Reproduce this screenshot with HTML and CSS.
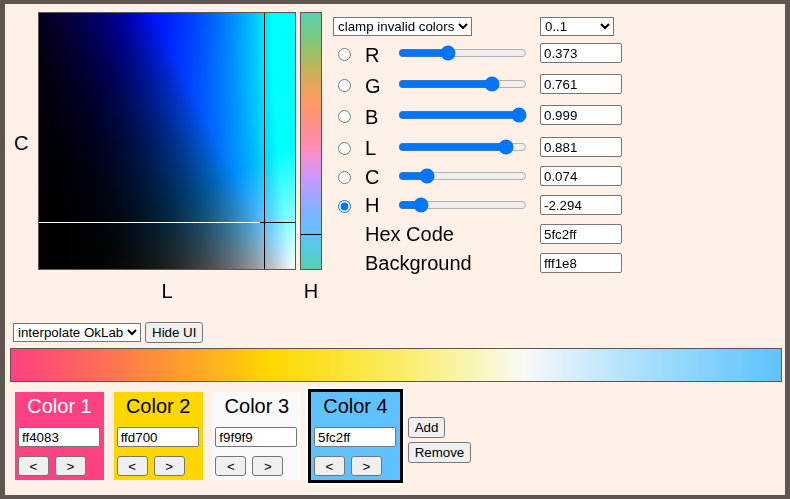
FILE: index.html
```html
<!DOCTYPE html>
<html>
<head>
<meta charset="utf-8">
<title>OkLab picker</title>
<link rel="stylesheet" href="styles.css">
</head>
<body>
<div class="page">
  <div class="top">
    <div class="picker">
      <div class="axis-c">C</div>
      <canvas id="plane" class="plane" width="256" height="256"></canvas>
      <canvas id="hue" class="hue" width="20" height="256"></canvas>
      <div></div>
      <div class="axis-lbl">L</div>
      <div class="axis-lbl hue-lbl">H</div>
    </div>
    <div class="controls">
      <select class="sel mode"><option>clamp invalid colors</option></select>
      <select class="sel range-sel"><option>0..1</option></select>

      <div class="cell"><input type="radio" name="ax" class="radio"></div>
      <div class="cell lbl p2">R</div>
      <div class="cell"><input type="range" class="slider" min="0" max="1" step="0.001" value="0.373"></div>
      <div class="cell"><input type="text" class="num" value="0.373"></div>

      <div class="cell"><input type="radio" name="ax" class="radio"></div>
      <div class="cell lbl p2">G</div>
      <div class="cell"><input type="range" class="slider" min="0" max="1" step="0.001" value="0.761"></div>
      <div class="cell"><input type="text" class="num" value="0.761"></div>

      <div class="cell"><input type="radio" name="ax" class="radio"></div>
      <div class="cell lbl p2">B</div>
      <div class="cell"><input type="range" class="slider" min="0" max="1" step="0.001" value="0.999"></div>
      <div class="cell"><input type="text" class="num" value="0.999"></div>

      <div class="cell"><input type="radio" name="ax" class="radio"></div>
      <div class="cell lbl p1">L</div>
      <div class="cell"><input type="range" class="slider" min="0" max="1" step="0.001" value="0.881"></div>
      <div class="cell"><input type="text" class="num" value="0.881"></div>

      <div class="cell"><input type="radio" name="ax" class="radio"></div>
      <div class="cell lbl p1">C</div>
      <div class="cell"><input type="range" class="slider" min="0" max="0.4" step="0.001" value="0.074"></div>
      <div class="cell"><input type="text" class="num" value="0.074"></div>

      <div class="cell"><input type="radio" name="ax" class="radio" checked></div>
      <div class="cell lbl">H</div>
      <div class="cell"><input type="range" class="slider" min="-3.1416" max="3.1416" step="0.001" value="-2.294"></div>
      <div class="cell"><input type="text" class="num" value="-2.294"></div>

      <div class="cell"></div>
      <div class="cell lbl wide">Hex Code</div>
      <div class="cell"><input type="text" class="num" value="5fc2ff"></div>

      <div class="cell"></div>
      <div class="cell lbl wide">Background</div>
      <div class="cell"><input type="text" class="num" value="fff1e8"></div>
    </div>
  </div>

  <div class="toolbar">
    <select class="sel"><option>interpolate OkLab</option></select>
    <button class="btn">Hide UI</button>
  </div>

  <div class="bar"><canvas id="bar" class="bar-canvas" width="770" height="32"></canvas></div>

  <div class="cards">
    <div class="card c1">
      <div class="card-title">Color 1</div>
      <input type="text" class="num" value="ff4083">
      <div class="arrows"><button class="btn arrow">&lt;</button><button class="btn arrow">&gt;</button></div>
    </div>
    <div class="card c2">
      <div class="card-title">Color 2</div>
      <input type="text" class="num" value="ffd700">
      <div class="arrows"><button class="btn arrow">&lt;</button><button class="btn arrow">&gt;</button></div>
    </div>
    <div class="card c3">
      <div class="card-title">Color 3</div>
      <input type="text" class="num" value="f9f9f9">
      <div class="arrows"><button class="btn arrow">&lt;</button><button class="btn arrow">&gt;</button></div>
    </div>
    <div class="card c4 selected">
      <div class="card-title">Color 4</div>
      <input type="text" class="num" value="5fc2ff">
      <div class="arrows"><button class="btn arrow">&lt;</button><button class="btn arrow">&gt;</button></div>
    </div>
    <div class="edit">
      <button class="btn">Add</button>
      <button class="btn">Remove</button>
    </div>
  </div>
</div>
<script src="script.js"></script>
</body>
</html>
```

FILE: styles.css
```css
html, body {
  margin: 0;
  padding: 0;
}
body {
  background: #5f574f;
  padding: 4px 5px;
  font-family: "Liberation Sans", Arial, sans-serif;
  color: #000;
}
.page {
  background: #fff1e8;
  height: 491px;
  box-sizing: border-box;
  padding: 8px;
}
.top {
  display: flex;
  align-items: flex-start;
}
.picker {
  display: grid;
  grid-template-columns: 25px 258px 26px;
  grid-template-rows: 258px auto;
}
.axis-c {
  font-size: 20px;
  line-height: 23px;
  padding-left: 1px;
  margin-top: 120px;
  align-self: start;
}
.plane, .hue {
  display: block;
  border: 1px solid #5f574f;
}
.hue {
  margin-left: 4px;
}
.axis-lbl {
  font-size: 20px;
  line-height: 23px;
  margin-top: 10px;
  text-align: center;
}
.hue-lbl {
  padding-left: 4px;
}
.controls {
  margin-left: 11px;
  padding-top: 5px;
  display: grid;
  grid-template-columns: 32px 31px 144px 82px;
  grid-template-rows: 26px 31px 31px 32px 29px 29px 29px 29px 20px;
  align-items: start;
}
.sel {
  font-family: "Liberation Sans", Arial, sans-serif;
  font-size: 13.33px;
  height: 19px;
  margin: 0;
  border: 1px solid #767676;
  border-radius: 0;
  background-color: #fff;
  color: #000;
}
.mode {
  grid-column: 1 / 4;
  justify-self: start;
}
.range-sel {
  width: 74px;
}
.cell {
  height: 20px;
  display: flex;
  align-items: center;
}
.radio {
  margin: 5px 0 0 5px;
  align-self: flex-start;
  width: 13px;
  height: 13px;
}
.lbl {
  font-size: 20px;
  line-height: 20px;
  align-items: flex-start;
  white-space: nowrap;
}
.lbl.p2 { padding-top: 2px; height: 18px; }
.lbl.p1 { padding-top: 1px; height: 19px; }
.lbl.wide { grid-column: 2 / 4; }
.slider {
  margin: 0 2px;
  width: 129px;
}
.num {
  width: 82px;
  height: 20px;
  box-sizing: border-box;
  margin: 0;
  border: 1px solid #767676;
  border-radius: 2px;
  padding: 0 3px;
  font-family: "Liberation Sans", Arial, sans-serif;
  font-size: 13.33px;
  background: #fff;
  color: #000;
}
.toolbar {
  margin-top: 19px;
  display: flex;
  align-items: center;
  gap: 4px;
  height: 21px;
}
.btn {
  font-family: "Liberation Sans", Arial, sans-serif;
  font-size: 13.33px;
  height: 21px;
  padding: 0 6px;
  margin: 0;
  border: 1px solid #767676;
  border-radius: 3px;
  background: #efefef;
  color: #000;
}
.bar {
  margin: 5px -5px 0 -3px;
  border: 1px solid #5f574f;
  height: 32px;
}
.bar-canvas {
  display: block;
  width: 770px;
  height: 32px;
}
.cards {
  margin-top: 7px;
  margin-left: -1px;
  display: flex;
  align-items: flex-start;
  gap: 3.67px;
}
.card {
  width: 83px;
  padding: 3px 3px 4px 3px;
  border: 3px solid transparent;
  background-clip: padding-box;
}
.card.selected {
  border-color: #000;
  outline: 2px solid #fff;
}
.c1 { background-color: #ff4083; color: #fff; }
.c2 { background-color: #ffd700; }
.c3 { background-color: #f9f9f9; }
.c4 { background-color: #5fc2ff; }
.card-title {
  font-size: 20px;
  line-height: 23px;
  height: 23px;
  text-align: center;
  margin-bottom: 9px;
}
.arrows {
  margin-top: 9px;
  display: flex;
  gap: 6px;
}
.btn.arrow {
  width: 31px;
  height: 20px;
  padding: 0;
}
.edit {
  margin-top: 28px;
  margin-left: 1px;
  display: flex;
  flex-direction: column;
  align-items: flex-start;
  gap: 4px;
}
```

FILE: script.js
```js
(function () {
  function labToRgb(L, a, b) {
    var l_ = L + 0.3963377774 * a + 0.2158037573 * b;
    var m_ = L - 0.1055613458 * a - 0.0638541728 * b;
    var s_ = L - 0.0894841775 * a - 1.2914855480 * b;
    var l = l_ * l_ * l_, m = m_ * m_ * m_, s = s_ * s_ * s_;
    var r = 4.0767416621 * l - 3.3077115913 * m + 0.2309699292 * s;
    var g = -1.2684380046 * l + 2.6097574011 * m - 0.3413193965 * s;
    var bb = -0.0041960863 * l - 0.7034186147 * m + 1.7076147010 * s;
    function c(v) { return Math.round(Math.max(0, Math.min(1, v)) * 255); }
    return [c(r), c(g), c(bb)];
  }
  function rgbToLab(r, g, b) {
    var l = 0.4122214708 * r + 0.5363325363 * g + 0.0514459929 * b;
    var m = 0.2119034982 * r + 0.6806995451 * g + 0.1073969566 * b;
    var s = 0.0883024619 * r + 0.2817188376 * g + 0.6299787005 * b;
    l = Math.cbrt(l); m = Math.cbrt(m); s = Math.cbrt(s);
    return [
      0.2104542553 * l + 0.7936177850 * m - 0.0040720468 * s,
      1.9779984951 * l - 2.4285922050 * m + 0.4505937099 * s,
      0.0259040371 * l + 0.7827717662 * m - 0.8086757660 * s
    ];
  }
  var H = -2.294, LV = 0.881, CV = 0.074, CMAX = 0.4;

  var plane = document.getElementById('plane');
  var ctx = plane.getContext('2d');
  var img = ctx.createImageData(256, 256);
  var ca = Math.cos(H), sa = Math.sin(H);
  var lineCol = Math.floor(LV * 256);
  var lineRow = Math.round((1 - CV / CMAX) * 256);
  for (var y = 0; y < 256; y++) {
    var C = (1 - (y + 0.5) / 256) * CMAX;
    for (var x = 0; x < 256; x++) {
      var L = (x + 0.5) / 256;
      var rgb = labToRgb(L, C * ca, C * sa);
      if (x === lineCol) rgb = [0, 0, 0];
      else if (y === lineRow) rgb = x >= 221 ? [0, 0, 0] : [255, 255, 255];
      var i = (y * 256 + x) * 4;
      img.data[i] = rgb[0]; img.data[i + 1] = rgb[1]; img.data[i + 2] = rgb[2]; img.data[i + 3] = 255;
    }
  }
  ctx.putImageData(img, 0, 0);

  var hue = document.getElementById('hue');
  var hctx = hue.getContext('2d');
  var himg = hctx.createImageData(20, 256);
  var hueRow = Math.round((Math.PI - H) / (2 * Math.PI) * 256);
  for (var y2 = 0; y2 < 256; y2++) {
    var h = Math.PI - (y2 + 0.5) / 256 * 2 * Math.PI;
    var rgb2 = y2 === hueRow ? [0, 0, 0] : labToRgb(LV, CV * Math.cos(h), CV * Math.sin(h));
    for (var x2 = 0; x2 < 20; x2++) {
      var j = (y2 * 20 + x2) * 4;
      himg.data[j] = rgb2[0]; himg.data[j + 1] = rgb2[1]; himg.data[j + 2] = rgb2[2]; himg.data[j + 3] = 255;
    }
  }
  hctx.putImageData(himg, 0, 0);

  var stops = [[255, 64, 131], [255, 215, 0], [249, 249, 249], [95, 194, 255]].map(function (c) {
    return rgbToLab(c[0] / 255, c[1] / 255, c[2] / 255);
  });
  var bar = document.getElementById('bar');
  var bctx = bar.getContext('2d');
  var W = bar.width, BH = bar.height;
  var bimg = bctx.createImageData(W, BH);
  for (var x3 = 0; x3 < W; x3++) {
    var t = (x3 + 0.5) / W * (stops.length - 1);
    var k = Math.min(stops.length - 2, Math.floor(t));
    var f = t - k;
    var A = stops[k], B = stops[k + 1];
    var rgb3 = labToRgb(A[0] + (B[0] - A[0]) * f, A[1] + (B[1] - A[1]) * f, A[2] + (B[2] - A[2]) * f);
    for (var y3 = 0; y3 < BH; y3++) {
      var q = (y3 * W + x3) * 4;
      bimg.data[q] = rgb3[0]; bimg.data[q + 1] = rgb3[1]; bimg.data[q + 2] = rgb3[2]; bimg.data[q + 3] = 255;
    }
  }
  bctx.putImageData(bimg, 0, 0);
})();
```
